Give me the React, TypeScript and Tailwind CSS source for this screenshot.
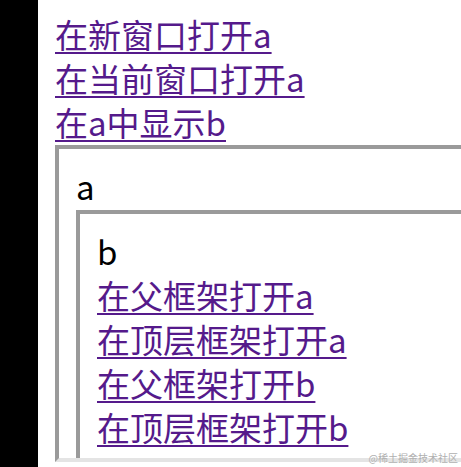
import React from "react";

const font = { fontFamily: '"Noto Sans CJK SC", "Noto Sans", sans-serif' };

function Link({ children }: { children: React.ReactNode }) {
  return (
    <div className="h-[44px] leading-[44px] whitespace-nowrap">
      <a
        href="#"
        className="text-[#551a8b] underline decoration-2 underline-offset-[4px]"
      >
        {children}
      </a>
    </div>
  );
}

export default function App() {
  return (
    <div
      className="relative flex h-[467px] w-[461px] overflow-hidden bg-white text-[33px] text-black"
      style={font}
    >
      <div className="w-[38px] shrink-0 bg-black" />
      <div className="flex flex-col pl-[17px] pt-[12px]">
        <Link>在新窗口打开a</Link>
        <Link>在当前窗口打开a</Link>
        <Link>在a中显示b</Link>
        <div className="mt-[1px] h-[317px] w-[630px] shrink-0 overflow-hidden border-4 border-t-[#9a9a9a] border-l-[#9a9a9a] border-b-[#e4e4e4] border-r-[#e4e4e4] pl-[17px] pt-[15px]">
          <div className="h-[44px] leading-[44px]">a</div>
          <div className="mt-[2px] h-[315px] w-[630px] border-4 border-t-[#9a9a9a] border-l-[#9a9a9a] border-b-[#e4e4e4] border-r-[#e4e4e4] pl-[17px] pt-[15px]">
            <div className="h-[44px] leading-[44px]">b</div>
            <Link>在父框架打开a</Link>
            <Link>在顶层框架打开a</Link>
            <Link>在父框架打开b</Link>
            <Link>在顶层框架打开b</Link>
          </div>
        </div>
      </div>
      <div className="absolute bottom-[3px] right-[3px] text-[10px] leading-[12px] text-[#b0b0b0]">
        @稀土掘金技术社区
      </div>
    </div>
  );
}
